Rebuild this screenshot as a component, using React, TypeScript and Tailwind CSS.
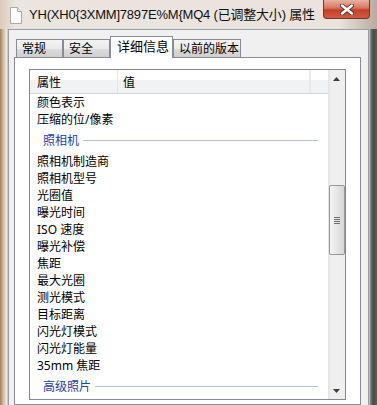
import React from 'react';

type Row = { label: string; group?: boolean };

const rows: Row[] = [
  { label: '颜色表示' },
  { label: '压缩的位/像素' },
  { label: '照相机', group: true },
  { label: '照相机制造商' },
  { label: '照相机型号' },
  { label: '光圈值' },
  { label: '曝光时间' },
  { label: 'ISO 速度' },
  { label: '曝光补偿' },
  { label: '焦距' },
  { label: '最大光圈' },
  { label: '测光模式' },
  { label: '目标距离' },
  { label: '闪光灯模式' },
  { label: '闪光灯能量' },
  { label: '35mm 焦距' },
  { label: '高级照片', group: true },
];

const tabs = [
  { label: '常规', w: 'w-[47px]' },
  { label: '安全', w: 'w-[47px]' },
  { label: '详细信息', w: 'w-[63px]', active: true },
  { label: '以前的版本', w: 'w-[68px]' },
];

function FileIcon() {
  return (
    <svg width="12" height="17" viewBox="0 0 12 17" className="ml-[10px] mt-[7px] shrink-0">
      <path d="M0.5 0.5 H7.5 L11.5 4.5 V16.5 H0.5 Z" fill="#ffffff" stroke="#a9a9a9" />
      <path d="M7.5 0.5 V4.5 H11.5" fill="#ececec" stroke="#a9a9a9" />
    </svg>
  );
}

function CloseButton() {
  return (
    <div className="ml-auto mr-[7px] w-[47px] h-[19px] shrink-0 rounded-b-[4px] border border-t-0 border-[#6b3a30] bg-[linear-gradient(#eab2a2_0%,#d8745c_45%,#c4402a_55%,#d25a3f_100%)] flex items-center justify-center">
      <svg width="14" height="11" viewBox="0 0 14 11">
        <path d="M2 1.5 L12 9.5 M12 1.5 L2 9.5" stroke="#4a3a36" strokeWidth="4.2" strokeLinecap="round" />
        <path d="M2 1.5 L12 9.5 M12 1.5 L2 9.5" stroke="#ffffff" strokeWidth="2.4" strokeLinecap="round" />
      </svg>
    </div>
  );
}

function Arrow({ down }: { down?: boolean }) {
  return (
    <svg width="7" height="4" viewBox="0 0 7 4">
      <path d={down ? 'M0 0 H7 L3.5 4 Z' : 'M0 4 H7 L3.5 0 Z'} fill="#3c3c3c" />
    </svg>
  );
}

function ScrollBar() {
  return (
    <div className="w-[17px] shrink-0 flex flex-col bg-[linear-gradient(to_right,#e3e3e3,#f0f0f0_20%,#eeeeee)]">
      <div className="h-[17px] flex items-center justify-center">
        <Arrow />
      </div>
      <div className="flex-1 flex flex-col items-center">
        <div className="mt-[98px] w-[16px] h-[70px] rounded-[2px] border border-[#979797] bg-[linear-gradient(to_right,#f4f4f4,#e6e6e6_50%,#d6d6d6)] flex flex-col items-center justify-center gap-[1px]">
          <div className="w-[6px] h-px bg-[#6f6f6f]" />
          <div className="w-[6px] h-px bg-[#6f6f6f]" />
          <div className="w-[6px] h-px bg-[#6f6f6f]" />
          <div className="w-[6px] h-px bg-[#6f6f6f]" />
        </div>
      </div>
      <div className="h-[17px] flex items-center justify-center">
        <Arrow down />
      </div>
    </div>
  );
}

function ListView() {
  return (
    <div className="h-[331px] border border-[#828790] flex bg-white">
      <div className="flex-1 min-w-0 flex flex-col overflow-hidden">
        {/* Header */}
        <div className="h-[24px] shrink-0 flex border-b border-[#d5d5d5] bg-[linear-gradient(#ffffff_0%,#ffffff_42%,#f1f2f4_43%,#f1f2f4_100%)] text-[12px] text-black">
          <div className="w-[88px] border-r border-[#e3e4e6] flex items-center pl-[7px] pt-[2px]">属性</div>
          <div className="w-[193px] border-r-2 border-[#e8e9eb] flex items-center pl-[5px] pt-[2px]">值</div>
        </div>
        {rows.map((r) =>
          r.group ? (
            <div key={r.label} className="h-[25px] shrink-0 flex items-center pl-[13px] pr-[10px]">
              <span className="text-[12px] text-[#2240a8] leading-none">{r.label}</span>
              <div className="flex-1 h-px ml-[4px] bg-[#b4c1dc]" />
            </div>
          ) : (
            <div key={r.label} className="h-[17px] shrink-0 flex items-center pl-[7px] text-[12px] text-black leading-none">
              {r.label}
            </div>
          )
        )}
      </div>
      <ScrollBar />
    </div>
  );
}

export default function App() {
  return (
    <div className="w-[377px] h-[405px] overflow-hidden flex flex-col bg-[#e7e0d8] font-['Noto_Sans','Noto_Sans_CJK_SC',sans-serif]">
      {/* Title bar */}
      <div className="h-[29px] shrink-0 flex items-start bg-[linear-gradient(to_right,#d9cbbd,#ebe5df_4%,#e9e3dc_90%,#b9ab9c)]">
        <FileIcon />
        <span className="ml-[7px] mt-[5px] font-['Liberation_Sans','Noto_Sans_CJK_SC',sans-serif] text-[13px] tracking-[-0.2px] leading-[20px] text-[#101010] whitespace-nowrap">
          YH(XH0{'{'}3XMM]7897E%M{'{'}MQ4 (已调整大小) 属性
        </span>
        <CloseButton />
      </div>

      <div className="flex flex-1 min-h-0">
        {/* left frame */}
        <div className="w-[8px] shrink-0 bg-[linear-gradient(to_right,#9c7d60,#cdb497_35%,#e6dbcf_70%,#f3efea_88%,#a3a3a3)]" />

        {/* client area */}
        <div className="w-[361px] shrink-0 border-l border-t border-r border-[#9a9ea3] bg-[#f0f0f0] pt-[6px] pl-[5px] pr-[7px] flex flex-col">
          <div className="flex items-end pl-[2px] text-[12px] text-black whitespace-nowrap">
            {tabs.map((t) =>
              t.active ? (
                <div
                  key={t.label}
                  className={`${t.w} h-[22px] -mb-px relative z-10 bg-white border-l border-t border-r border-[#898c95] flex items-center pl-[6px] pb-[2px] leading-none text-[13px]`}
                >
                  {t.label}
                </div>
              ) : (
                <div
                  key={t.label}
                  className={`${t.w} h-[18px] border-l border-t border-r border-[#898c95] bg-[linear-gradient(#f3f3f3,#ebebeb_50%,#dddddd_51%,#cfcfcf)] flex items-center pl-[5px] leading-none`}
                >
                  {t.label}
                </div>
              )
            )}
          </div>
          <div className="flex-1 border border-[#898c95] bg-white pt-[11px] pl-[14px] pr-[14px]">
            <ListView />
          </div>
        </div>

        {/* right frame */}
        <div className="w-[8px] shrink-0 bg-[linear-gradient(to_right,#d6d3cc,#6c7068_25%,#454c47_60%,#5d6159)]" />
      </div>
    </div>
  );
}
